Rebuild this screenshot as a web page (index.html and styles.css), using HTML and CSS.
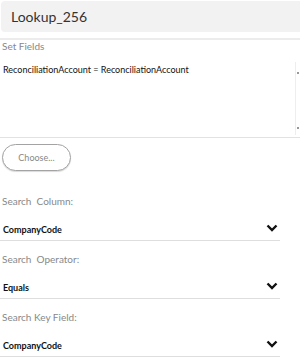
FILE: index.html
```html
<!DOCTYPE html>
<html lang="en">
<head>
  <meta charset="UTF-8">
  <title>Lookup_256</title>
  <link rel="stylesheet" href="styles.css">
</head>
<body>
  <div class="title-bar">
    <div class="title">Lookup_256</div>
  </div>

  <div class="label">Set Fields</div>
  <div class="set-fields">
    <div class="set-fields-text">ReconciliationAccount = ReconciliationAccount</div>
    <div class="scrollbar"><span></span><span></span></div>
  </div>

  <button class="choose">Choose...</button>

  <div class="fields">
    <div class="field">
      <div class="label">Search&nbsp; Column:</div>
      <div class="select">
        <span>CompanyCode</span>
        <svg class="chevron" width="12" height="8" viewBox="0 0 12 8"><polyline points="1.5,1.5 6,6 10.5,1.5" fill="none" stroke="#111" stroke-width="2.4"/></svg>
      </div>
    </div>
    <div class="field">
      <div class="label">Search&nbsp; Operator:</div>
      <div class="select">
        <span>Equals</span>
        <svg class="chevron" width="12" height="8" viewBox="0 0 12 8"><polyline points="1.5,1.5 6,6 10.5,1.5" fill="none" stroke="#111" stroke-width="2.4"/></svg>
      </div>
    </div>
    <div class="field">
      <div class="label">Search Key Field:</div>
      <div class="select">
        <span>CompanyCode</span>
        <svg class="chevron" width="12" height="8" viewBox="0 0 12 8"><polyline points="1.5,1.5 6,6 10.5,1.5" fill="none" stroke="#111" stroke-width="2.4"/></svg>
      </div>
    </div>
  </div>
</body>
</html>
```

FILE: styles.css
```css
body {
  margin: 0;
  width: 300px;
  font-family: Lato, "Open Sans", sans-serif;
  background: #fff;
}
.title-bar {
  padding: 1px 0 6px 1px;
  border-bottom: 2px solid #ececec;
}
.title {
  height: 31px;
  line-height: 31px;
  padding-left: 10px;
  background-color: #f2f2f2;
  border-radius: 4px 0 0 4px;
  font-size: 14px;
  color: #333;
}
.label {
  height: 12px;
  line-height: 12px;
  padding-left: 2px;
  font-size: 10px;
  color: #888;
}
.set-fields {
  display: flex;
  height: 85px;
  border-bottom: 1px solid #e2e2e2;
}
.set-fields-text {
  flex: 1;
  padding: 12px 0 0 3px;
  font-size: 9px;
  line-height: 12px;
  color: #111;
}
.scrollbar {
  width: 3px;
  margin: 10px 0 2px;
  border-left: 1px solid #eee;
  display: flex;
  flex-direction: column;
  justify-content: space-between;
  padding: 10px 0 6px 1px;
}
.scrollbar span {
  width: 2px;
  height: 2px;
  background: #999;
}
.choose {
  display: block;
  margin: 6px 0 0 2px;
  width: 69px;
  height: 27px;
  padding: 0;
  border: 1px solid #a3a3a3;
  border-radius: 14px;
  background: #fff;
  box-shadow: 0 1px 1px rgba(0, 0, 0, 0.15);
  font-family: Lato, sans-serif;
  font-size: 9px;
  color: #888;
}
.fields {
  margin-top: 12px;
}
.field {
  padding-top: 12px;
}
.field .label {
  margin-bottom: 11px;
}
.select {
  width: 280px;
  height: 22px;
  display: flex;
  align-items: center;
  justify-content: space-between;
  border-bottom: 1px solid #dedede;
  font-size: 9px;
  font-weight: bold;
  color: #111;
}
.select span {
  padding-left: 3px;
}
.chevron {
  margin-right: 2px;
  margin-bottom: 2px;
}
```
